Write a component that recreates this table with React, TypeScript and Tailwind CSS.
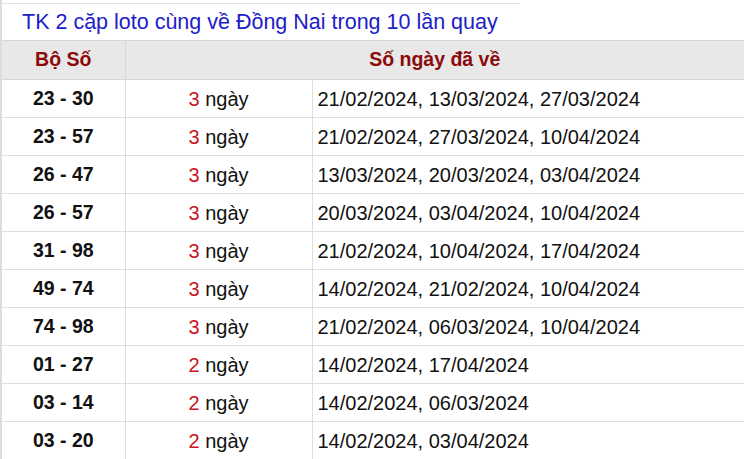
import React from "react";

const rows: [string, number, string][] = [
  ["23 - 30", 3, "21/02/2024, 13/03/2024, 27/03/2024"],
  ["23 - 57", 3, "21/02/2024, 27/03/2024, 10/04/2024"],
  ["26 - 47", 3, "13/03/2024, 20/03/2024, 03/04/2024"],
  ["26 - 57", 3, "20/03/2024, 03/04/2024, 10/04/2024"],
  ["31 - 98", 3, "21/02/2024, 10/04/2024, 17/04/2024"],
  ["49 - 74", 3, "14/02/2024, 21/02/2024, 10/04/2024"],
  ["74 - 98", 3, "21/02/2024, 06/03/2024, 10/04/2024"],
  ["01 - 27", 2, "14/02/2024, 17/04/2024"],
  ["03 - 14", 2, "14/02/2024, 06/03/2024"],
  ["03 - 20", 2, "14/02/2024, 03/04/2024"],
];

export default function App() {
  return (
    <div
      className="w-[744px] h-[459px] overflow-hidden bg-white border-l-2 border-[#dcdcdc] text-[#111]"
      style={{ fontFamily: '"Liberation Sans", Arial, sans-serif' }}
    >
      <div className="mt-[3px] w-[518px] border-t border-[#e2e2e2] h-[37px] pl-5 pt-[5px] text-[21.5px] leading-[26px] text-[#2020c8]">
        TK 2 cặp loto cùng về Đồng Nai trong 10 lần quay
      </div>
      <table className="w-full border-collapse text-[20px]">
        <colgroup>
          <col className="w-[123px]" />
          <col className="w-[187px]" />
          <col />
        </colgroup>
        <thead>
          <tr className="h-[39px] bg-[#e8e8e8] text-[#8b0a0a] font-bold text-[19.5px]">
            <th className="border border-[#d6d6d6] border-l-0 font-bold">Bộ Số</th>
            <th colSpan={2} className="border border-[#d6d6d6] border-r-0 font-bold">
              Số ngày đã về
            </th>
          </tr>
        </thead>
        <tbody>
          {rows.map(([pair, n, dates]) => (
            <tr key={pair} className="h-[38px]">
              <td className="border border-[#dedede] border-l-0 text-center font-bold text-[19.5px]">{pair}</td>
              <td className="border border-[#dedede] text-center">
                <span className="text-[#c8141e]">{n}</span> ngày
              </td>
              <td className="border border-[#dedede] border-r-0 pl-[5px]">{dates}</td>
            </tr>
          ))}
        </tbody>
      </table>
    </div>
  );
}
